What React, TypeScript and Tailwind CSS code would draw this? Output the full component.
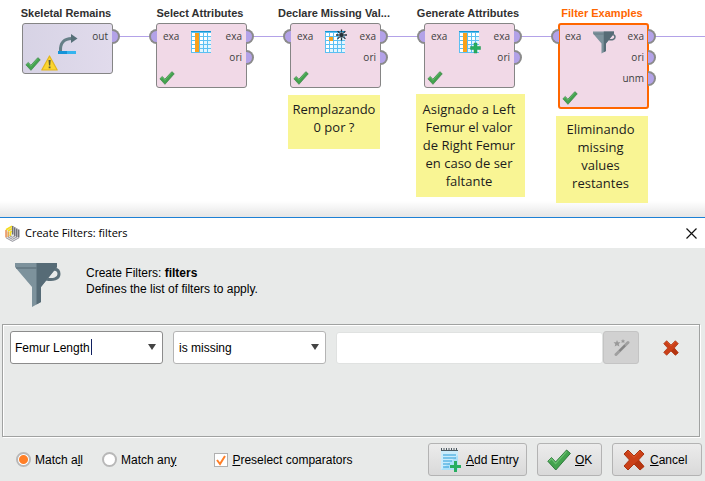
import React from 'react'

type NodeIcon = 'retrieve' | 'column' | 'missing' | 'generate' | 'filter'

interface OperatorNode {
  title: string
  place: string
  box: string
  icon: NodeIcon
  input: boolean
  outputs: string[]
  warning?: boolean
}

const nodes: OperatorNode[] = [
  { title: 'Skeletal Remains', place: 'left-[22px] h-[51px]', box: 'border-[#858585] bg-linear-to-r from-[#d7d3e5] to-[#e1dbec]', icon: 'retrieve', input: false, outputs: ['out'], warning: true },
  { title: 'Select Attributes', place: 'left-[156px] h-[65px]', box: 'border-[#858585] bg-[#f1d9e7]', icon: 'column', input: true, outputs: ['exa', 'ori'] },
  { title: 'Declare Missing Val...', place: 'left-[290px] h-[65px]', box: 'border-[#858585] bg-[#f1d9e7]', icon: 'missing', input: true, outputs: ['exa', 'ori'] },
  { title: 'Generate Attributes', place: 'left-[424px] h-[65px]', box: 'border-[#858585] bg-[#f1d9e7]', icon: 'generate', input: true, outputs: ['exa', 'ori'] },
  { title: 'Filter Examples', place: 'left-[558px] h-[86px]', box: 'border-[#ff6600] bg-[#f1d9e7]', icon: 'filter', input: true, outputs: ['exa', 'ori', 'unm'] },
]

const notes = [
  { place: 'left-[288px] top-[95px] w-[92px] h-[54px] pt-[5px]', lines: ['Remplazando', '0 por ?'] },
  { place: 'left-[416px] top-[94px] w-[109px] h-[103px] pt-[6px] pr-[3px]', lines: ['Asignado a Left', 'Femur el valor', 'de Right Femur', 'en caso de ser', 'faltante'] },
  { place: 'left-[556px] top-[116px] w-[92px] h-[87px] pt-[4px] pr-[3px]', lines: ['Eliminando', 'missing', 'values', 'restantes'] },
]

function Check({ className }: { className: string }) {
  return (
    <svg viewBox="0 0 24 22" className={className} aria-hidden="true">
      <path d="M0.8 12.2 L4.6 8.6 L8.6 13 L19.6 1 L23.4 4.4 L8.8 21 Z" fill="#43a34e" stroke="#2f7a3c" strokeWidth="1" strokeLinejoin="round" />
      <path d="M1.8 12.2 L4.6 9.8 L8.6 14.6 L19.6 2.4" fill="none" stroke="#6cc072" strokeWidth="1.2" />
    </svg>
  )
}

function Cross({ className }: { className: string }) {
  return (
    <svg viewBox="0 0 22 22" className={className} aria-hidden="true">
      <path d="M5 1 L11 7 L17 1 L21 5 L15.5 11 L21 17.5 L17 21 L11 15 L5 21 L1 17 L6.5 11 L1 5 Z" fill="#cb4018" stroke="#a93310" strokeWidth="1" strokeLinejoin="round" />
      <path d="M11 15 L17 21 L21 17.5 L15.5 11 Z" fill="#b53510" />
      <path d="M5 2.2 L11 8.4 L17 2.2" fill="none" stroke="#e0582c" strokeWidth="1" />
    </svg>
  )
}

function Warning() {
  return (
    <svg viewBox="0 0 17 16" className="h-4 w-[17px]" aria-hidden="true">
      <path d="M8.5 1 L16.2 15 H0.8 Z" fill="#fbd52f" stroke="#e3b51c" strokeWidth="1.2" strokeLinejoin="round" />
      <path d="M7.5 5 H9.7 L9.2 10.6 H8 Z M7.7 11.6 H9.5 V13.2 H7.7 Z" fill="#5b5a36" />
    </svg>
  )
}

function Funnel({ className }: { className: string }) {
  return (
    <svg viewBox="0 0 46 46" className={className} aria-hidden="true">
      <path d="M34 10 C36 6 44 6 44 12 C44 17 38 18.5 31 17" fill="none" stroke="#5c707a" strokeWidth="3" />
      <path d="M0 1 H42 V5 L26 25 V40 L17 45 V25 L0 5 Z" fill="#7d929c" />
      <path d="M21.5 1 H42 V5 L26 25 V40 L21.5 42.5 Z" fill="#566b76" />
      <path d="M1 6 H21.5" stroke="#5c707a" strokeWidth="1.2" />
    </svg>
  )
}

function TableGrid({ orange }: { orange: 'column' | 'cell' }) {
  return (
    <g>
      <rect x="0" y="0" width="20" height="22" fill="#5cc0f2" />
      {[0, 1, 2, 3, 4].map((row) =>
        [0, 1, 2, 3, 4].map((col) => (
          <rect key={`${row}-${col}`} x={1 + col * 4} y={2 + row * 4} width="3" height="3" fill={row + col < 5 ? '#ffffff' : '#e3f5fe'} />
        )),
      )}
      <rect x="0" y="0" width="20" height="1" fill="#1596d3" />
      {orange === 'column' ? (
        <rect x="4" y="2" width="4" height="19" fill="#f9a11b" />
      ) : (
        <rect x="4" y="6" width="4" height="4" fill="#f9a11b" />
      )}
    </g>
  )
}

function OperatorIcon({ kind }: { kind: NodeIcon }) {
  if (kind === 'filter') return <Funnel className="h-[23px] w-[23px]" />
  return (
    <svg viewBox="0 0 23 23" className="h-[23px] w-[23px] overflow-visible" aria-hidden="true">
      {kind === 'retrieve' && (
        <g>
          <path d="M3.5 18 C3 10 7 5.5 15 5.5" fill="none" stroke="#667f87" strokeWidth="3" />
          <path d="M14 1 L20.5 5.5 L14 10 Z" fill="#566f78" />
          <rect x="1" y="18" width="9" height="3" fill="#1593d8" />
          <rect x="10" y="18" width="9" height="3" fill="#35b4ef" />
        </g>
      )}
      {kind === 'column' && <TableGrid orange="column" />}
      {kind === 'missing' && (
        <g>
          <TableGrid orange="cell" />
          <path d="M16.5 -1.5 V9.5 M11 4 H22 M12.6 0.1 L20.4 7.9 M20.4 0.1 L12.6 7.9" stroke="#243039" strokeWidth="1.3" />
          <circle cx="16.5" cy="4" r="2.6" fill="#263038" stroke="#8ea6b4" strokeWidth="0.8" />
        </g>
      )}
      {kind === 'generate' && (
        <g>
          <TableGrid orange="column" />
          <path d="M15 12 H18 V15.5 H21.5 V18.5 H18 V22 H15 V18.5 H11.5 V15.5 H15 Z" fill="#27ae60" stroke="#219653" strokeWidth="0.5" />
        </g>
      )}
    </svg>
  )
}

function Port({ side }: { side: 'in' | 'out' }) {
  return (
    <span
      className={
        side === 'in'
          ? 'absolute right-full h-[15px] w-2 rounded-l-full border-2 border-r-0 border-[#8b8b8b] bg-[#b3a2e8]'
          : 'absolute left-full h-[15px] w-2 rounded-r-full border-2 border-l-0 border-[#8b8b8b] bg-[#b3a2e8]'
      }
    />
  )
}

function Operator({ node }: { node: OperatorNode }) {
  const selected = node.icon === 'filter'
  return (
    <div className={`absolute top-[23px] w-[91px] ${node.place}`}>
      <h2 className={`absolute inset-x-0 bottom-full mb-[2px] flex justify-center pr-[3px] text-[11px] leading-4 font-bold whitespace-nowrap ${selected ? 'text-[#ff6600]' : 'text-[#303030]'}`}>
        {node.title}
      </h2>
      <div className={`flex h-full flex-col justify-between rounded-[3px] ${selected ? 'border-2' : 'border'} ${node.box}`}>
        <div className={`grid grid-cols-[34px_23px_1fr] ${selected ? '-m-px' : ''}`}>
          <div className="relative flex h-[21px] items-center pt-[4px] pl-[6px] font-['Open_Sans',sans-serif] text-[10px] text-[#404040]">
            {node.input && 'exa'}
            {node.input && <Port side="in" />}
          </div>
          <div className={node.icon === 'retrieve' ? 'h-0 pt-[9px]' : 'h-0 pt-[7px]'}>
            <OperatorIcon kind={node.icon} />
          </div>
          <div>
            {node.outputs.map((name) => (
              <div key={name} className="relative flex h-[21px] items-center justify-end pt-[4px] pr-[4px] font-['Open_Sans',sans-serif] text-[10px] text-[#404040]">
                {name}
                <Port side="out" />
              </div>
            ))}
          </div>
        </div>
        <div className="flex items-end pb-[2px] pl-[2px]">
          <Check className="h-[14px] w-4" />
          {node.warning && <Warning />}
        </div>
      </div>
    </div>
  )
}

function ProcessCanvas() {
  return (
    <main className="relative h-[217px] overflow-hidden bg-white">
      <svg className="absolute inset-0 h-full w-full" aria-hidden="true">
        <g stroke="#b3a2e8" strokeWidth="1">
          <line x1="118" y1="36.5" x2="151" y2="36.5" />
          <line x1="252" y1="36.5" x2="285" y2="36.5" />
          <line x1="386" y1="36.5" x2="419" y2="36.5" />
          <line x1="520" y1="36.5" x2="553" y2="36.5" />
          <line x1="654" y1="36.5" x2="100%" y2="36.5" />
        </g>
      </svg>
      {nodes.map((node) => (
        <Operator key={node.title} node={node} />
      ))}
      <div className="absolute inset-x-0 bottom-0 h-4 bg-linear-to-b from-transparent to-black/10" />
      {notes.map((note) => (
        <p key={note.lines[0]} className={`absolute bg-[#f9f594] text-center font-['Open_Sans',sans-serif] text-[13px] leading-[18px] whitespace-nowrap text-[#1c1c1c] ${note.place}`}>
          {note.lines.map((line) => (
            <span key={line} className="block">{line}</span>
          ))}
        </p>
      ))}
    </main>
  )
}

function Logo() {
  return (
    <svg viewBox="0 0 15 17" className="h-[17px] w-[15px]" aria-hidden="true">
      <path d="M1 4.5 L7.5 0.5 L14 4.5 V12.5 L7.5 16.5 L1 12.5 Z" fill="#e4e4e6" />
      <path d="M1 12.5 V5" fill="none" stroke="#e8742a" strokeWidth="1.2" />
      <path d="M3.2 12 V6.5" fill="none" stroke="#ee9a2a" strokeWidth="1.2" />
      <path d="M1 4.8 L7 1.2 M3 6 L7 3.6 M5.4 11 V7.4 L7 6.2" fill="none" stroke="#f5dc1f" strokeWidth="1.6" />
      <path d="M7.8 1 V9.5 M9.8 2.2 V11 M11.8 3.4 V12 M13.8 4.6 V12.5" stroke="#4c4c55" strokeWidth="1.1" />
      <path d="M1 12.8 L7.5 16.4 L14 12.8 M2.8 11.8 L7.5 14.3 L12.2 11.8 M4.6 10.8 L7.5 12.3 L10.4 10.8" fill="none" stroke="#97979f" strokeWidth="1" />
    </svg>
  )
}

function Notepad() {
  return (
    <svg viewBox="0 0 22 24" className="h-6 w-[22px] shrink-0" aria-hidden="true">
      <path d="M1 2 H18 V22 H1 Z" fill="#c9ecfc" />
      <path d="M1 22 L18 7 V22 Z" fill="#ace0f8" />
      <path d="M1 2.5 H18" stroke="#4b5961" strokeWidth="1" />
      <path d="M1.5 0 V3 M4 0 V3 M6.5 0 V3 M9 0 V3 M11.5 0 V3 M14 0 V3 M16.5 0 V3" stroke="#4b5961" strokeWidth="1" />
      <path d="M3 7 H16 M3 10 H16 M3 13 H12 M3 16 H10 M3 19 H9" stroke="#289bd8" strokeWidth="1.2" />
      <path d="M14 13 H17 V17 H21 V20 H17 V24 H14 V20 H10 V17 H14 Z" fill="#27ae60" />
    </svg>
  )
}

function DownArrow() {
  return (
    <svg viewBox="0 0 8 6" className="h-[6px] w-2" aria-hidden="true">
      <path d="M0 0 H8 L4 6 Z" fill="#444444" />
    </svg>
  )
}

const buttonStyle = 'flex h-[33px] items-center rounded-[3px] border border-[#b3b3b3] bg-linear-to-b from-[#ececec] to-[#d9d9d9]'

function FilterDialog() {
  return (
    <section role="dialog" aria-label="Create Filters: filters" className="border-t border-[#1d80d5] bg-[#e8eae9]">
      <header className="flex h-[30px] items-center bg-white pr-[8px] pl-[5px]">
        <Logo />
        <h1 className="flex-1 pl-[5px] font-['Open_Sans',sans-serif] text-[11px] leading-4">Create Filters: filters</h1>
        <button aria-label="Close" className="p-0">
          <svg viewBox="0 0 11 11" className="h-[11px] w-[11px]" aria-hidden="true">
            <path d="M0.5 0.5 L10.5 10.5 M10.5 0.5 L0.5 10.5" stroke="#111111" strokeWidth="1.2" />
          </svg>
        </button>
      </header>

      <div className="flex h-[76px] items-start pt-[14px] pl-[15px]">
        <Funnel className="h-[46px] w-[46px]" />
        <div className="pt-[3px] pl-[25px] leading-4">
          <p>Create Filters: <strong>filters</strong></p>
          <p>Defines the list of filters to apply.</p>
        </div>
      </div>

      <div className="mr-[5px] ml-[2px] h-[113px] border border-[#a0a2a1] pt-[6px] pr-[20px] pl-[7px] shadow-[1px_1px_0_#ffffff,inset_1px_1px_0_#ffffff]">
        <div className="flex items-center">
          <div className="relative w-[153px]">
            <input aria-label="Attribute" defaultValue="Femur Length" className="h-[33px] w-full rounded-[3px] border border-[#8c8c8c] bg-white pr-6 pl-[4px] outline-none" />
            <span className="absolute top-2 left-[81px] h-4 w-px bg-[#102060]" />
            <button aria-label="Show attributes" className="absolute top-[13px] right-[7px]"><DownArrow /></button>
          </div>
          <div className="relative ml-[10px] w-[153px]">
            <select aria-label="Comparator" className="h-[33px] w-full appearance-none rounded-[3px] border border-[#b4b4b4] bg-white pr-6 pl-[5px] outline-none">
              <option>is missing</option>
            </select>
            <span className="pointer-events-none absolute top-[13px] right-[7px]"><DownArrow /></span>
          </div>
          <input aria-label="Value" disabled className="ml-[10px] h-8 min-w-0 flex-1 rounded-[3px] border border-[#e0e2e1] bg-white px-1" />
          <button aria-label="Edit value" disabled className="flex h-[33px] w-9 items-center justify-center rounded-[3px] border border-[#c4c4c4] bg-[#d1d1d1]">
            <svg viewBox="0 0 17 17" className="h-[17px] w-[17px]" aria-hidden="true">
              <path d="M3 15.5 L15 3.5" stroke="#a0a0a0" strokeWidth="3" strokeLinecap="round" />
              <path d="M6.5 12 L12 6.5" stroke="#858585" strokeWidth="2" />
              <path d="M4 1 L5 3.2 L7.5 3.3 L5.7 5 L6.4 7.5 L4 6.2 L1.7 7.5 L2.3 5 L0.5 3.3 L3.1 3.2 Z M10 0 L10.7 1.4 L12.2 1.4 L11.1 2.5 L11.5 4 L10 3.2 L8.5 4 L8.9 2.5 L7.8 1.4 L9.3 1.4 Z" fill="#999999" />
            </svg>
          </button>
          <button aria-label="Remove entry" className="ml-6"><Cross className="h-4 w-4" /></button>
        </div>
      </div>

      <footer className="flex items-center pt-[6px] pr-[3px] pb-[5px] pl-4">
        <label className="flex items-center gap-[4px]">
          <input type="radio" name="match" defaultChecked className="m-0 h-[15px] w-[15px] appearance-none rounded-full border-2 border-[#b8b8b8] bg-white checked:bg-[radial-gradient(circle,#ff7f27_4px,#ffffff_5px)]" />
          <span>Match a<u>l</u>l</span>
        </label>
        <label className="ml-[19px] flex items-center gap-[4px]">
          <input type="radio" name="match" className="m-0 h-[15px] w-[15px] appearance-none rounded-full border-2 border-[#b8b8b8] bg-white checked:bg-[radial-gradient(circle,#ff7f27_4px,#ffffff_5px)]" />
          <span>Match an<u>y</u></span>
        </label>
        <label className="relative ml-[38px] flex items-center gap-[4px]">
          <input type="checkbox" defaultChecked className="peer m-0 h-[14px] w-[14px] appearance-none border border-[#b0b0b0] bg-white" />
          <svg viewBox="0 0 14 14" className="pointer-events-none absolute left-0 hidden h-[14px] w-[14px] peer-checked:block" aria-hidden="true">
            <path d="M3 7 L6 11 L11 3" fill="none" stroke="#ff7f27" strokeWidth="2" />
          </svg>
          <span><u>P</u>reselect comparators</span>
        </label>
        <div className="ml-auto flex gap-[10px]">
          <button className={`${buttonStyle} w-[99px] gap-[4px] pl-[11px]`}><Notepad /><span><u>A</u>dd Entry</span></button>
          <button className={`${buttonStyle} w-[65px] gap-[4px] pl-[9px]`}><Check className="h-[22px] w-6" /><span><u>O</u>K</span></button>
          <button className={`${buttonStyle} w-[90px] gap-[5px] pl-[10px]`}><Cross className="h-[22px] w-[22px]" /><span><u>C</u>ancel</span></button>
        </div>
      </footer>
    </section>
  )
}

export default function App() {
  return (
    <div className="min-h-screen bg-[#e8eae9] font-['Liberation_Sans',Arial,sans-serif] text-[12px] text-black">
      <ProcessCanvas />
      <FilterDialog />
    </div>
  )
}
